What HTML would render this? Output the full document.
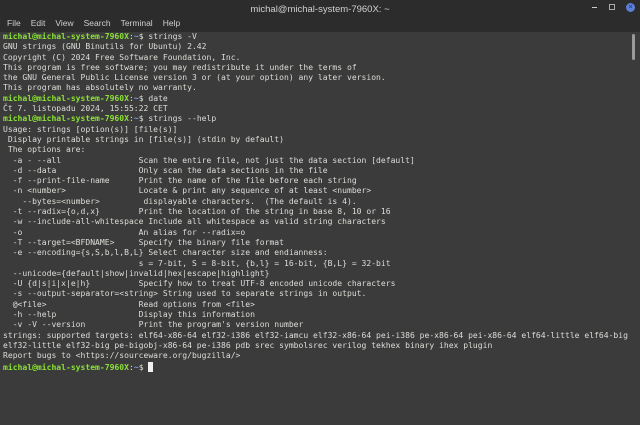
<!DOCTYPE html>
<html><head><meta charset="utf-8"><style>
body{margin:0;width:640px;height:425px;overflow:hidden;background:#3b3b3b;font-family:"Liberation Sans",sans-serif}
#tb{position:absolute;left:0;top:0;width:640px;height:32px;background:#2c2c2c}
#title{position:absolute;top:4px;left:0;width:640px;text-align:center;color:#d0d0d0;font-size:9.5px}
#menu{position:absolute;top:18px;left:7px;color:#cfcfcf;font-size:8.5px}
#menu span{margin-right:10px}
#term{position:absolute;left:3px;top:32px;margin:0;font-family:"DejaVu Sans Mono",monospace;font-size:8.05px;line-height:10.3px;color:#dcdfd8;white-space:pre}
.g{color:#8ae234;font-weight:bold}.b{color:#7f9fe0;font-weight:bold}
.cur{display:inline-block;width:5px;height:10px;background:#f0f0f0;vertical-align:-2px}
#sb{position:absolute;left:632px;top:34px;width:3px;height:26px;background:#9a9a9a;border-radius:2px}
</style></head><body>
<div id="tb"><div id="title">michal@michal-system-7960X: ~</div>
<div id="menu"><span>File</span><span>Edit</span><span>View</span><span>Search</span><span>Terminal</span><span>Help</span></div>
<div style="position:absolute;left:592px;top:7px;width:5px;height:1px;background:#ccc"></div>
<div style="position:absolute;left:609px;top:4px;width:4px;height:4px;border:1px solid #aaa"></div>
<div style="position:absolute;left:626px;top:3px;width:9px;height:9px;border-radius:50%;background:#5b7fd8;color:#1b2a55;font-size:7px;line-height:9px;text-align:center">×</div>
</div>
<div id="sb"></div>
<pre id="term"><span class="g">michal@michal-system-7960X</span>:<span class="b">~</span>$ strings -V
GNU strings (GNU Binutils for Ubuntu) 2.42
Copyright (C) 2024 Free Software Foundation, Inc.
This program is free software; you may redistribute it under the terms of
the GNU General Public License version 3 or (at your option) any later version.
This program has absolutely no warranty.
<span class="g">michal@michal-system-7960X</span>:<span class="b">~</span>$ date
Čt 7. listopadu 2024, 15:55:22 CET
<span class="g">michal@michal-system-7960X</span>:<span class="b">~</span>$ strings --help
Usage: strings [option(s)] [file(s)]
 Display printable strings in [file(s)] (stdin by default)
 The options are:
  -a - --all                Scan the entire file, not just the data section [default]
  -d --data                 Only scan the data sections in the file
  -f --print-file-name      Print the name of the file before each string
  -n &lt;number&gt;               Locate &amp; print any sequence of at least &lt;number&gt;
    --bytes=&lt;number&gt;         displayable characters.  (The default is 4).
  -t --radix={o,d,x}        Print the location of the string in base 8, 10 or 16
  -w --include-all-whitespace Include all whitespace as valid string characters
  -o                        An alias for --radix=o
  -T --target=&lt;BFDNAME&gt;     Specify the binary file format
  -e --encoding={s,S,b,l,B,L} Select character size and endianness:
                            s = 7-bit, S = 8-bit, {b,l} = 16-bit, {B,L} = 32-bit
  --unicode={default|show|invalid|hex|escape|highlight}
  -U {d|s|i|x|e|h}          Specify how to treat UTF-8 encoded unicode characters
  -s --output-separator=&lt;string&gt; String used to separate strings in output.
  @&lt;file&gt;                   Read options from &lt;file&gt;
  -h --help                 Display this information
  -v -V --version           Print the program's version number
strings: supported targets: elf64-x86-64 elf32-i386 elf32-iamcu elf32-x86-64 pei-i386 pe-x86-64 pei-x86-64 elf64-little elf64-big
elf32-little elf32-big pe-bigobj-x86-64 pe-i386 pdb srec symbolsrec verilog tekhex binary ihex plugin
Report bugs to &lt;https://sourceware.org/bugzilla/&gt;
<span class="g">michal@michal-system-7960X</span>:<span class="b">~</span>$ <span class="cur"></span></pre>
</body></html>
